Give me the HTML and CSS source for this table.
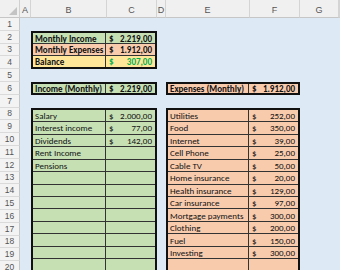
FILE: index.html
```html
<!DOCTYPE html>
<html>
<head>
<meta charset="utf-8">
<link rel="stylesheet" href="styles.css">
</head>
<body>
<div class="sheet">
  <div class="corner"><span class="tri"></span></div>
  <div class="ch">A</div>
  <div class="ch">B</div>
  <div class="ch">C</div>
  <div class="ch">D</div>
  <div class="ch">E</div>
  <div class="ch">F</div>
  <div class="ch">G</div>
  <div class="ch"></div>

  <div class="rh r1">1</div>
  <div class="rh r2">2</div>
  <div class="rh r3">3</div>
  <div class="rh r4">4</div>
  <div class="rh r5">5</div>
  <div class="rh r6">6</div>
  <div class="rh r7">7</div>
  <div class="rh r8">8</div>
  <div class="rh r9">9</div>
  <div class="rh r10">10</div>
  <div class="rh r11">11</div>
  <div class="rh r12">12</div>
  <div class="rh r13">13</div>
  <div class="rh r14">14</div>
  <div class="rh r15">15</div>
  <div class="rh r16">16</div>
  <div class="rh r17">17</div>
  <div class="rh r18">18</div>
  <div class="rh r19">19</div>
  <div class="rh r20">20</div>

  <div class="block summary">
    <div class="c lbl green b">Monthly Income</div>
    <div class="c amt green b"><span>$</span><span>2.219,00</span></div>
    <div class="c lbl orange b">Monthly Expenses</div>
    <div class="c amt orange b"><span>$</span><span>1.912,00</span></div>
    <div class="c lbl yellow b last">Balance</div>
    <div class="c amt yellow b pos last"><span>$</span><span>307,00</span></div>
  </div>

  <div class="block inc-head green">
    <div class="c lbl b last">Income (Monthly)</div>
    <div class="c amt b last"><span>$</span><span>2.219,00</span></div>
  </div>

  <div class="block exp-head orange">
    <div class="c lbl b last">Expenses (Monthly)</div>
    <div class="c amt b last"><span>$</span><span>1.912,00</span></div>
  </div>

  <div class="block inc-table green">
    <div class="c lbl">Salary</div><div class="c amt"><span>$</span><span>2.000,00</span></div>
    <div class="c lbl">Interest income</div><div class="c amt"><span>$</span><span>77,00</span></div>
    <div class="c lbl">Dividends</div><div class="c amt"><span>$</span><span>142,00</span></div>
    <div class="c lbl">Rent Income</div><div class="c amt"></div>
    <div class="c lbl">Pensions</div><div class="c amt"></div>
    <div class="c lbl"></div><div class="c amt"></div>
    <div class="c lbl"></div><div class="c amt"></div>
    <div class="c lbl"></div><div class="c amt"></div>
    <div class="c lbl"></div><div class="c amt"></div>
    <div class="c lbl"></div><div class="c amt"></div>
    <div class="c lbl"></div><div class="c amt"></div>
    <div class="c lbl"></div><div class="c amt"></div>
    <div class="c lbl last"></div><div class="c amt last"></div>
  </div>

  <div class="block exp-table orange">
    <div class="c lbl">Utilities</div><div class="c amt"><span>$</span><span>252,00</span></div>
    <div class="c lbl">Food</div><div class="c amt"><span>$</span><span>350,00</span></div>
    <div class="c lbl">Internet</div><div class="c amt"><span>$</span><span>39,00</span></div>
    <div class="c lbl">Cell Phone</div><div class="c amt"><span>$</span><span>25,00</span></div>
    <div class="c lbl">Cable TV</div><div class="c amt"><span>$</span><span>50,00</span></div>
    <div class="c lbl">Home insurance</div><div class="c amt"><span>$</span><span>20,00</span></div>
    <div class="c lbl">Health insurance</div><div class="c amt"><span>$</span><span>129,00</span></div>
    <div class="c lbl">Car insurance</div><div class="c amt"><span>$</span><span>97,00</span></div>
    <div class="c lbl">Mortgage payments</div><div class="c amt"><span>$</span><span>300,00</span></div>
    <div class="c lbl">Clothing</div><div class="c amt"><span>$</span><span>200,00</span></div>
    <div class="c lbl">Fuel</div><div class="c amt"><span>$</span><span>150,00</span></div>
    <div class="c lbl">Investing</div><div class="c amt"><span>$</span><span>300,00</span></div>
    <div class="c lbl last"></div><div class="c amt last"></div>
  </div>
</div>
</body>
</html>
```

FILE: styles.css
```css
html, body {
  margin: 0;
  padding: 0;
  width: 340px;
  height: 270px;
  overflow: hidden;
  background: #dde9f5;
}

.sheet {
  display: grid;
  grid-template-columns: 20px 11px 76px 50px 9px 84px 50px 39px 1fr;
  grid-template-rows: 18px repeat(20, 12.8px);
  width: 340px;
  height: 274px;
  font-family: Carlito, Lato, "Liberation Sans", sans-serif;
  font-size: 9px;
  color: #111;
  background: #dde9f5;
}

.corner {
  grid-row: 1;
  grid-column: 1;
  background: #f0f0f0;
  border-right: 1px solid #d0d0d0;
  border-bottom: 1px solid #c6c6c6;
  position: relative;
}
.tri {
  position: absolute;
  right: 2px;
  bottom: 2px;
  width: 0;
  height: 0;
  border-left: 8px solid transparent;
  border-bottom: 8px solid #c4c4c4;
}

.ch {
  grid-row: 1;
  background: #f0f0f0;
  border-right: 1px solid #d4d4d4;
  border-bottom: 1px solid #c6c6c6;
  color: #555;
  display: flex;
  align-items: center;
  justify-content: center;
  font-family: "Liberation Sans", sans-serif;
  font-size: 9px;
  padding-top: 2px;
  box-sizing: border-box;
}

.rh {
  grid-column: 1;
  background: #f3f3f3;
  border-right: 1px solid #c6c6c6;
  border-bottom: 1px solid #dadada;
  color: #555;
  display: flex;
  align-items: center;
  justify-content: center;
  font-family: "Liberation Sans", sans-serif;
  font-size: 8.5px;
  box-sizing: border-box;
}
.r1 { grid-row: 2; } .r2 { grid-row: 3; } .r3 { grid-row: 4; } .r4 { grid-row: 5; }
.r5 { grid-row: 6; } .r6 { grid-row: 7; } .r7 { grid-row: 8; } .r8 { grid-row: 9; }
.r9 { grid-row: 10; } .r10 { grid-row: 11; } .r11 { grid-row: 12; } .r12 { grid-row: 13; }
.r13 { grid-row: 14; } .r14 { grid-row: 15; } .r15 { grid-row: 16; } .r16 { grid-row: 17; }
.r17 { grid-row: 18; } .r18 { grid-row: 19; } .r19 { grid-row: 20; } .r20 { grid-row: 21; }

.block {
  display: grid;
  grid-auto-rows: 1fr;
  border: 2px solid #111;
  box-sizing: border-box;
}
.summary { grid-row: 3 / 6; grid-column: 3 / 5; grid-template-columns: 1fr 49px; }
.inc-head { grid-row: 7; grid-column: 3 / 5; grid-template-columns: 1fr 49px; }
.exp-head { grid-row: 7; grid-column: 6 / 8; grid-template-columns: 1fr 49px; }
.inc-table { grid-row: 9 / 22; grid-column: 3 / 5; grid-template-columns: 1fr 49px; }
.exp-table { grid-row: 9 / 22; grid-column: 6 / 8; grid-template-columns: 1fr 49px; }

.green { background: #c6e0b4; }
.orange { background: #f8cbad; }
.yellow { background: #ffe699; }

.c {
  display: flex;
  align-items: center;
  border-bottom: 1px solid #333;
  box-sizing: border-box;
  white-space: nowrap;
  overflow: hidden;
  line-height: 1;
}
.c.last { border-bottom: none; }
.lbl {
  padding-left: 2px;
  border-right: 1px solid #333;
}
.amt {
  justify-content: space-between;
  padding: 0 3px 0 3px;
}
.b { font-weight: bold; }
.pos { color: #00b050; }
```
